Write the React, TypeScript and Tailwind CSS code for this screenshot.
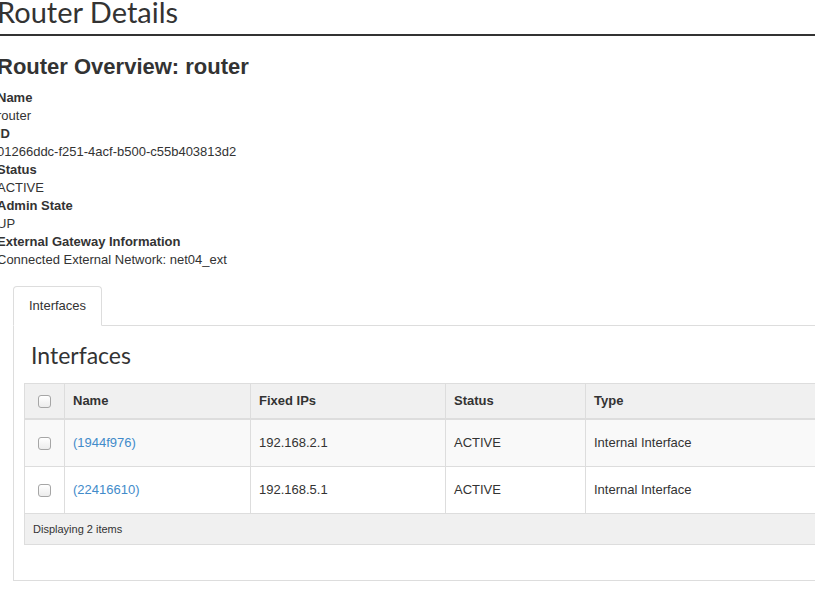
import React from "react";

const rows = [
  { id: "(1944f976)", ip: "192.168.2.1", status: "ACTIVE", type: "Internal Interface", striped: true },
  { id: "(22416610)", ip: "192.168.5.1", status: "ACTIVE", type: "Internal Interface", striped: false },
];

const details: [string, string][] = [
  ["Name", "router"],
  ["ID", "01266ddc-f251-4acf-b500-c55b403813d2"],
  ["Status", "ACTIVE"],
  ["Admin State", "UP"],
  ["External Gateway Information", "Connected External Network: net04_ext"],
];

function Checkbox() {
  return (
    <span className="inline-block w-[13px] h-[13px] rounded-[3px] border border-[#a6a6a6] bg-gradient-to-b from-white to-[#ececec]" />
  );
}

const cols = "grid grid-cols-[40px_186px_195px_140px_1fr]";

export default function App() {
  return (
    <div className="w-[815px] h-[611px] overflow-hidden bg-white text-[#333] font-['Liberation_Sans',Arial,sans-serif]">
      <div className="ml-[-3px] w-[900px]">
        <h1 className="font-['Lato',sans-serif] text-[29px] leading-[23px] pb-[11px] border-b-2 border-[#333]">
          Router Details
        </h1>

        <h3 className="mt-[19px] text-[22px] leading-[24px] font-bold">Router Overview: router</h3>

        <dl className="mt-[10px] text-[13px] leading-[18px]">
          {details.map(([k, v]) => (
            <React.Fragment key={k}>
              <dt className="font-bold">{k}</dt>
              <dd>{v}</dd>
            </React.Fragment>
          ))}
        </dl>

        <div className="mt-[17px] ml-[16px]">
          {/* tab strip */}
          <div className="flex border-b border-[#ddd]">
            <div className="-mb-px h-[40px] px-[15px] flex items-center bg-white border border-[#ddd] border-b-white rounded-t-[4px] text-[13px] leading-[18px]">
              Interfaces
            </div>
          </div>

          {/* tab panel */}
          <div className="border-l border-b border-[#ddd] px-[10px] pt-[17px] pb-[35px]">
            <h3 className="ml-[7px] font-['Lato',sans-serif] text-[23px] leading-[24px]">Interfaces</h3>

            <div className="mt-[16px] border border-[#ddd] text-[13px] leading-[18px]">
              <div className={`${cols} h-[36px] bg-[#f0f0f0] border-b-2 border-[#ddd] font-bold`}>
                <div className="flex items-center justify-center border-r border-[#ddd]">
                  <Checkbox />
                </div>
                <div className="flex items-center px-[8px] border-r border-[#ddd]">Name</div>
                <div className="flex items-center px-[8px] border-r border-[#ddd]">Fixed IPs</div>
                <div className="flex items-center px-[8px] border-r border-[#ddd]">Status</div>
                <div className="flex items-center px-[8px]">Type</div>
              </div>
              {rows.map((r) => (
                <div
                  key={r.id}
                  className={`${cols} h-[47px] border-b border-[#ddd] ${r.striped ? "bg-[#f9f9f9]" : "bg-white"}`}
                >
                  <div className="flex items-center justify-center border-r border-[#ddd]">
                    <Checkbox />
                  </div>
                  <div className="flex items-center px-[8px] border-r border-[#ddd]">
                    <a className="text-[#428bca]">{r.id}</a>
                  </div>
                  <div className="flex items-center px-[8px] border-r border-[#ddd]">{r.ip}</div>
                  <div className="flex items-center px-[8px] border-r border-[#ddd]">{r.status}</div>
                  <div className="flex items-center px-[8px]">{r.type}</div>
                </div>
              ))}
              <div className="h-[30px] flex items-center px-[8px] bg-[#f0f0f0] text-[11px] leading-[15px]">
                Displaying 2 items
              </div>
            </div>
          </div>
        </div>
      </div>
    </div>
  );
}
